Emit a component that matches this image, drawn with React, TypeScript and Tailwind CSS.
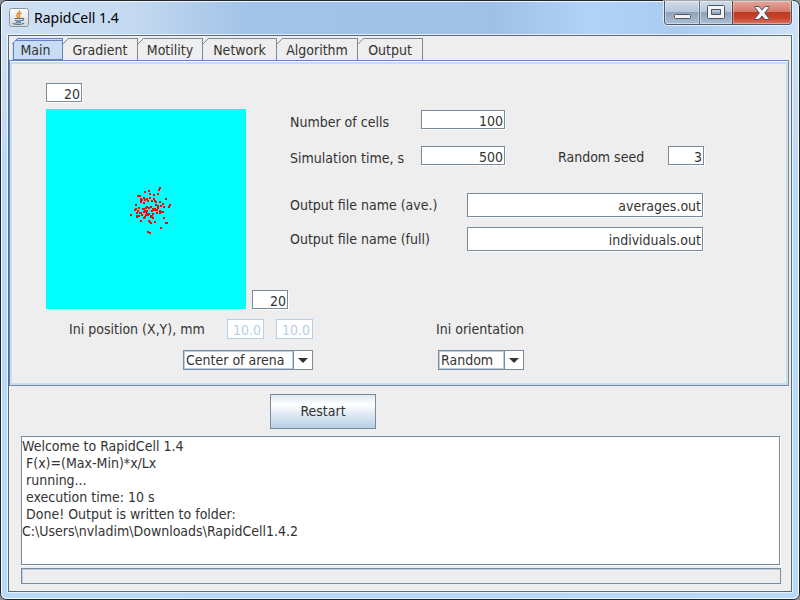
import React, { useState } from "react";

const TABS = [
  { name: "Main", width: "w-[51px] pr-[3px]" },
  { name: "Gradient", width: "w-[75px]" },
  { name: "Motility", width: "w-[65px]" },
  { name: "Network", width: "w-[74px]" },
  { name: "Algorithm", width: "w-[81px]" },
  { name: "Output", width: "w-[65px]" },
];

// Bacteria positions, in pixels, relative to the corner of the swarm.
const CELLS = [
  [50, 18], [49, 20], [39, 21], [35, 22], [40, 24], [44, 25], [48, 24], [28, 26], [30, 26], [34, 28],
  [31, 29], [31, 30], [31, 32], [32, 30], [35, 30], [37, 29], [38, 31], [40, 28], [42, 31], [44, 29],
  [45, 31], [46, 32], [50, 32], [56, 29], [34, 33], [26, 35], [46, 35], [53, 34], [60, 35], [59, 37],
  [51, 36], [54, 37], [48, 36], [48, 38], [47, 40], [45, 39], [44, 40], [43, 39], [42, 41], [41, 37],
  [39, 38], [37, 37], [36, 38], [33, 39], [34, 39], [35, 41], [29, 38], [26, 39], [25, 40], [28, 41],
  [27, 43], [30, 43], [31, 43], [32, 45], [34, 42], [36, 42], [37, 41], [37, 44], [38, 45], [39, 44],
  [43, 44], [42, 46], [41, 46], [41, 47], [43, 48], [36, 45], [35, 47], [34, 48], [27, 46], [29, 46],
  [21, 45], [27, 47], [50, 41], [50, 43], [51, 42], [52, 42], [53, 42], [47, 43], [46, 40], [54, 48],
  [45, 52], [39, 51], [40, 52], [41, 53], [31, 51], [56, 53], [57, 53], [51, 58], [38, 62], [40, 63],
];

const LOG = `Welcome to RapidCell 1.4
 F(x)=(Max-Min)*x/Lx
 running...
 execution time: 10 s
 Done! Output is written to folder:
C:\\Users\\nvladim\\Downloads\\RapidCell1.4.2`;

type FieldProps = { id?: string; label?: string; value: string; size: string; disabled?: boolean };

function Field({ id, label, value, size, disabled }: FieldProps) {
  return (
    <input
      id={id}
      type="text"
      aria-label={label}
      defaultValue={value}
      disabled={disabled}
      className={
        "shrink-0 border bg-white p-0 text-right outline-none " +
        (disabled
          ? "border-[#b8cfe5] pt-px pr-[2px] text-[#b8cfe5] "
          : "border-[#7a8a99] pt-[2px] pr-px shadow-[1px_1px_0_#fff] ") +
        size
      }
    />
  );
}

function Combo({ id, label, options, width }: { id: string; label?: string; options: string[]; width: string }) {
  return (
    <div className={"relative h-[20px] border border-[#7a8a99] bg-white " + width}>
      <select
        id={id}
        aria-label={label}
        className="block h-full w-full appearance-none border border-[#b8cfe5] bg-white pl-px leading-[16px] outline-none"
      >
        {options.map((o) => (
          <option key={o}>{o}</option>
        ))}
      </select>
      <span className="pointer-events-none absolute inset-y-0 right-0 flex w-[19px] items-center justify-center border-l border-[#7a8a99] bg-white shadow-[-1px_0_0_#b8cfe5]">
        <svg width="10" height="5" viewBox="0 0 10 5" aria-hidden="true">
          <path d="M0 0h10L5 5z" fill="#333" />
        </svg>
      </span>
    </div>
  );
}

function JavaIcon() {
  return (
    <svg width="20" height="20" viewBox="0 0 20 20" className="shrink-0" aria-hidden="true">
      <defs>
        <linearGradient id="tile" x1="0" y1="0" x2="0" y2="1">
          <stop offset="0" stopColor="#fdfdfd" />
          <stop offset="1" stopColor="#d5d9dd" />
        </linearGradient>
      </defs>
      <rect x=".5" y=".5" width="19" height="18" rx="2" fill="url(#tile)" stroke="#8d949b" />
      <path d="M10.500 2.500C11.500 5 7 5.500 8 8c.3.900 1 1.300 1.300 2M12.500 5c-2 1-3 1.700-2 3.200.5.800.3 1.400-.3 2" fill="none" stroke="#ec8424" strokeWidth="1.500" />
      <path d="M5.500 10.500h7.500M6 12.300c2 .7 5 .7 6.500 0M6.500 14c2 .6 4 .6 5.500 0M13 10.500c2.500-.5 2 1.800-.3 2.300M4 15c-1 1.500 9.500 2 11 .2" fill="none" stroke="#4f7592" strokeWidth="1.200" />
    </svg>
  );
}

function CaptionButtons() {
  return (
    <div className="-mt-px flex h-[24px] shrink-0 overflow-hidden rounded-b-[4px] border border-t-0 border-[#4a5868] shadow-[0_0_0_1px_rgba(255,255,255,0.6)]">
      <button type="button" aria-label="Minimize" className="flex w-[35px] justify-center border-r border-[#5d6c7e] bg-[linear-gradient(#cfdbe8_0%,#b6c7da_48%,#8fa4bb_50%,#a9bfd6_100%)] pt-[13px] shadow-[inset_0_0_0_1px_rgba(255,255,255,0.4)]">
        <svg width="17" height="6" viewBox="0 0 17 6" aria-hidden="true">
          <rect x=".5" y=".5" width="16" height="4" rx="1" fill="#f4f4f4" stroke="#4c5566" />
        </svg>
      </button>
      <button type="button" aria-label="Maximize" className="flex w-[33px] justify-center border-r border-[#5d3d3d] bg-[linear-gradient(#cfdbe8_0%,#b6c7da_48%,#8fa4bb_50%,#a9bfd6_100%)] pt-[4px] shadow-[inset_0_0_0_1px_rgba(255,255,255,0.4)]">
        <svg width="18" height="14" viewBox="0 0 18 14" aria-hidden="true">
          <path d="M.5 1.500a1 1 0 0 1 1-1h15a1 1 0 0 1 1 1v11a1 1 0 0 1-1 1h-15a1 1 0 0 1-1-1zM4.500 4.500v5h9v-5z" fill="#f4f4f4" stroke="#4c5566" fillRule="evenodd" />
        </svg>
      </button>
      <button type="button" aria-label="Close" className="flex w-[58px] justify-center bg-[linear-gradient(#e5a79c_0%,#d3796b_46%,#bd3a24_50%,#c9432c_75%,#dc7763_100%)] pt-[5px] shadow-[inset_0_0_0_1px_rgba(255,255,255,0.35)]">
        <svg width="16" height="14" viewBox="0 0 16 14" aria-hidden="true">
          <path d="M1 .5h4l3 3.500 3-3.500h4v1L10.700 7 15 12.500v1h-4L8 10l-3 3.500H1v-1L5.300 7 1 1.500z" fill="#f4f4f4" stroke="#4c5566" />
        </svg>
      </button>
    </div>
  );
}

export default function App() {
  const [tab, setTab] = useState("Main");

  return (
    <div className="bg-[#8a9099] font-['DejaVu_Sans_Condensed','DejaVu_Sans',sans-serif] text-[14px] leading-[17px] text-[#333]">
      <div className="flex min-h-screen flex-col rounded-[7px] border border-[#20242b] bg-[linear-gradient(90deg,#cfe0f2_0%,#c5daf1_16%,#a3c4e8_30%,#9fc1e5_62%,#b1d3f7_74%,#a9cbf0_85%,#cde2f8_100%)]">
        <div className="flex grow flex-col rounded-[6px] border border-white/80 bg-[linear-gradient(transparent_0px,transparent_34px,#b8d8f8_180px)] px-[6px] pb-[6px]">
          <header className="flex h-[33px] items-start">
            <div className="flex grow items-center gap-[5px] pt-[6px] pl-px">
              <JavaIcon />
              <h1 className="font-['Noto_Sans','Open_Sans',sans-serif] text-[14px] leading-[20px] text-black">RapidCell 1.4</h1>
            </div>
            <CaptionButtons />
          </header>

          <main className="flex grow flex-col border border-[#5c6b7c] bg-[#eee] shadow-[0_0_0_1px_rgba(255,255,255,0.7)]">
            <div role="tablist" className="flex pt-[2px] pl-[3px]">
              {TABS.map((t) => {
                const on = t.name === tab;
                return (
                  <button
                    key={t.name}
                    type="button"
                    role="tab"
                    aria-selected={on}
                    onClick={() => setTab(t.name)}
                    className={
                      "relative h-[22px] border-t border-r pt-px " +
                      (on ? "border-[#6382bf] bg-[#c8ddf2] " : "border-[#7a8a99] bg-[#eee] ") +
                      t.width
                    }
                  >
                    {on && <span className="absolute inset-x-px top-px bottom-0 -mr-px border border-r-0 border-[#6382bf]" />}
                    <svg className="absolute -top-px left-0" width="6" height="6" viewBox="0 0 6 6" aria-hidden="true">
                      <path d="M0 0h6L0 6z" fill="#eee" />
                      <path d="M0 6 6 0" stroke={on ? "#6382bf" : "#7a8a99"} />
                    </svg>
                    <span className="relative">{t.name}</span>
                  </button>
                );
              })}
            </div>

            <section className="mr-[2px] border border-[#7a8a99] border-t-[#6382bf] border-l-[#6382bf] bg-white pt-px">
              <div className="border-2 border-[#c8ddf2] bg-[#eee] pb-[13px] pl-[34px]">
                <div className="flex">
                  <div className="w-[244px] shrink-0 pt-[19px]">
                    <Field label="Arena height, mm" value="20" size="block h-[19px] w-[36px]" />
                    <div className="mt-[7px] flex items-end gap-[6px]">
                      <svg width="200" height="200" viewBox="0 0 200 200" className="block shrink-0 bg-[#00ffff]" role="img" aria-label="Arena">
                        <g transform="translate(63 60)" fill="#f00">
                          {CELLS.map(([x, y], i) => (
                            <rect key={i} x={x} y={y} width="2" height="2" />
                          ))}
                        </g>
                      </svg>
                      <Field label="Arena width, mm" value="20" size="h-[19px] w-[36px]" />
                    </div>
                  </div>

                  <div className="pt-[46px]">
                    <div className="flex h-[36px] items-start">
                      <label htmlFor="cells" className="w-[131px] pt-[4px]">Number of cells</label>
                      <Field id="cells" value="100" size="h-[19px] w-[84px]" />
                    </div>
                    <div className="flex h-[47px] items-start">
                      <label htmlFor="time" className="w-[131px] pt-[4px]">Simulation time, s</label>
                      <Field id="time" value="500" size="h-[19px] w-[84px]" />
                      <label htmlFor="seed" className="ml-[53px] w-[110px] pt-[3px]">Random seed</label>
                      <Field id="seed" value="3" size="h-[19px] w-[36px]" />
                    </div>
                    <div className="flex h-[24px] items-center">
                      <label htmlFor="ave" className="w-[177px]">Output file name (ave.)</label>
                      <Field id="ave" value="averages.out" size="h-[24px] w-[236px]" />
                    </div>
                    <div className="mt-[10px] flex h-[24px] items-center">
                      <label htmlFor="full" className="w-[177px]">Output file name (full)</label>
                      <Field id="full" value="individuals.out" size="h-[24px] w-[236px]" />
                    </div>
                  </div>
                </div>

                <div className="mt-[10px] flex">
                  <div className="flex w-[267px] shrink-0 flex-col items-end gap-[11px]">
                    <div className="flex items-center">
                      <label htmlFor="inix" className="w-[158px]">Ini position (X,Y), mm</label>
                      <Field id="inix" value="10.0" size="h-[20px] w-[37px]" disabled />
                      <span className="w-[12px]" />
                      <Field label="Ini position Y" value="10.0" size="h-[20px] w-[37px]" disabled />
                    </div>
                    <Combo id="place" label="Ini position" options={["Center of arena", "Custom"]} width="w-[130px]" />
                  </div>
                  <div className="ml-[123px] flex flex-col gap-[11px]">
                    <label htmlFor="orient" className="flex h-[20px] items-center">Ini orientation</label>
                    <div className="pl-[2px]">
                      <Combo id="orient" options={["Random", "Fixed"]} width="w-[86px]" />
                    </div>
                  </div>
                </div>
              </div>
            </section>

            <div className="flex grow flex-col pt-[8px] pr-[10px] pb-[7px] pl-[12px]">
              <button
                type="button"
                className="ml-[249px] h-[35px] w-[106px] border border-[#7a8a99] bg-[linear-gradient(#dde8f3_0%,#fff_30%,#dde8f3_60%,#b8cfe5_100%)]"
              >
                Restart
              </button>
              <textarea
                aria-label="Log"
                readOnly
                value={LOG}
                className="mt-[7px] mr-px block grow resize-none overflow-hidden border border-[#7a8a99] bg-white p-0 pt-px whitespace-pre outline-none shadow-[1px_1px_0_#fff]"
              />
              <progress
                aria-label="Simulation progress"
                value={0}
                max={100}
                className="mt-[3px] block h-[16px] w-full appearance-none border border-[#7a8a99] bg-[#eee] shadow-[inset_1px_1px_0_#b8cfe5] [&::-webkit-progress-bar]:bg-transparent"
              />
            </div>
          </main>
        </div>
      </div>
    </div>
  );
}
